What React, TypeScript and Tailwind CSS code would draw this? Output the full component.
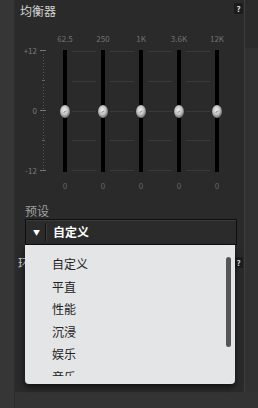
const freqs = ["62.5", "250", "1K", "3.6K", "12K"];
const presets = ["自定义", "平直", "性能", "沉浸", "娱乐", "音乐"];
const scale = ["+12", "0", "-12"];

const font = { fontFamily: '"Noto Sans CJK SC", "Liberation Sans", sans-serif' };

function Knob() {
  return (
    <svg width="10" height="13" viewBox="0 0 10 13">
      <defs>
        <radialGradient id="knob" cx="45%" cy="40%" r="65%">
          <stop offset="0%" stopColor="#f2f2f2" />
          <stop offset="50%" stopColor="#c4c4c4" />
          <stop offset="100%" stopColor="#5e5e5e" />
        </radialGradient>
      </defs>
      <ellipse cx="5" cy="6.5" rx="5" ry="6.5" fill="url(#knob)" />
      <path d="M3.8 8 Q4.4 5.6 6.2 6.2" stroke="#7a7a7a" strokeWidth="0.8" fill="none" />
    </svg>
  );
}

function Ruler() {
  const dots = [];
  for (let y = 4; y < 120; y += 3) {
    if (Math.abs(y - 30) < 2 || Math.abs(y - 60) < 2 || Math.abs(y - 90) < 2) continue;
    dots.push(<rect key={y} x="4" y={y} width="1" height="1" fill="#555" />);
  }
  return (
    <svg width="7" height="122" viewBox="0 0 7 122">
      {dots}
      {[0.5, 60.5, 120.5].map((y) => (
        <line key={y} x1="1" y1={y} x2="7" y2={y} stroke="#777" />
      ))}
      {[30.5, 90.5].map((y) => (
        <line key={y} x1="3" y1={y} x2="6" y2={y} stroke="#666" />
      ))}
    </svg>
  );
}

function Lines() {
  return (
    <div className="flex h-[122px] flex-1 flex-col justify-between py-[1px]">
      {[0, 1, 2, 3, 4].map((i) => (
        <div key={i} className="h-px bg-[#3a3a3a]" />
      ))}
    </div>
  );
}

function HelpBadge() {
  return (
    <div className="flex h-[11px] w-[9px] items-center justify-center bg-[#1c1c1c] text-[8px] font-bold leading-none text-[#e0e0e0]">
      ?
    </div>
  );
}

export default function App() {
  return (
    <div className="relative flex h-[408px] w-[258px] overflow-hidden bg-[#333333]" style={font}>
      <div className="w-[15px] border-r border-[#2c2c2c] bg-[#363636]" />

      <div className="flex h-[392px] w-[230px] flex-col border-r border-[#3c3c3c] bg-[#2a2a2a]">
        {/* equalizer header */}
        <div className="flex h-[28px] items-start justify-between pl-[5px] pr-[1px] pt-[3px]">
          <span className="text-[12px] leading-[16px] text-[#d4d4d4]">均衡器</span>
          <HelpBadge />
        </div>

        {/* sliders */}
        <div className="flex">
          <div className="flex w-[31px] flex-col">
            <div className="h-[22px]" />
            <div className="flex items-start">
              <div className="flex h-[122px] w-[22px] flex-col items-end justify-between text-[8px] leading-[8px] text-[#7a7a7a]">
                {scale.map((s) => (
                  <span key={s} className="-my-[3px]">{s}</span>
                ))}
              </div>
              <div className="ml-[2px]">
                <Ruler />
              </div>
            </div>
          </div>

          {freqs.map((f, i) => (
            <div key={f} className="flex w-[38px] flex-col items-center">
              <div className="mt-[6px] h-[10px] text-[8px] leading-[10px] text-[#727272]">{f}</div>
              <div className="mt-[6px] flex w-full items-start">
                {i > 0 ? <Lines /> : <div className="flex-1" />}
                <div className="relative mx-[5px] flex h-[122px] w-[4px] justify-center bg-black">
                  <div className="absolute top-[55px]">
                    <Knob />
                  </div>
                </div>
                {i < freqs.length - 1 ? <Lines /> : <div className="flex-1" />}
              </div>
              <div className="mt-[9px] h-[10px] text-[8px] leading-[10px] text-[#666]">0</div>
            </div>
          ))}
        </div>

        {/* preset */}
        <div className="mt-[13px] pl-[10px] text-[12px] leading-[14px] text-[#a0a0a0]">预设</div>
        <div className="relative z-10 ml-[10px] mt-[1px] w-[212px]">
          <div className="flex h-[26px] items-center border border-[#0f0f0f] bg-[#2b2b2b] shadow-[inset_0_1px_0_#3a3a3a]">
            <div className="flex w-[19px] justify-center pl-[2px] text-[7px] leading-none text-white">▼</div>
            <div className="h-[17px] w-px bg-[#111] shadow-[1px_0_0_#3d3d3d]" />
            <span className="ml-[7px] text-[12px] font-bold text-white">自定义</span>
          </div>

          <div className="absolute left-0 top-full flex h-[139px] w-[210px] rounded-b-[4px] bg-[#e4e5e7] py-[8px] shadow-[0_3px_6px_rgba(0,0,0,0.6)]">
            <div className="flex flex-1 flex-col overflow-hidden pl-[27px]">
              {presets.map((p) => (
                <div key={p} className="flex h-[22.5px] shrink-0 items-center text-[12px] text-[#222]">
                  {p}
                </div>
              ))}
            </div>
            <div className="mr-[4px] mt-[4px] h-[90px] w-[5px] rounded-full bg-[#555]" />
          </div>
        </div>

        {/* next section (under the open list) */}
        <div className="mt-[10px] flex items-start justify-between pl-[3px] pr-[1px]">
          <span className="text-[12px] leading-[16px] text-[#d4d4d4]">环绕</span>
          <div className="mt-[2px]">
            <HelpBadge />
          </div>
        </div>
      </div>

      <div className="flex flex-1 flex-col">
        <div className="h-[48px] bg-[#2b2b2b]" />
        <div className="h-[344px] bg-[#313131]" />
      </div>
    </div>
  );
}
